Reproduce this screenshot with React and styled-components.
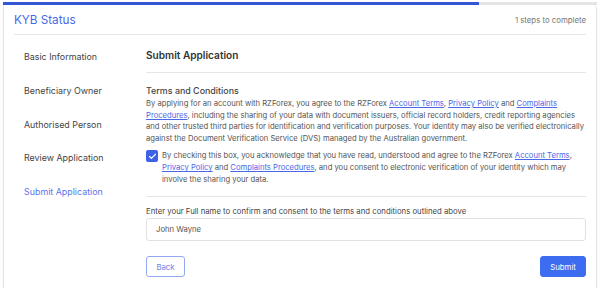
import styled, { createGlobalStyle } from 'styled-components';
import { Check } from 'lucide-react';

const GlobalStyle = createGlobalStyle`
    body {
        margin: 0;
        background: #ffffff;
        font-family: Inter, "Noto Sans", sans-serif;
        color: #444;
    }
`

const Page = styled.div`
    padding: 2px 5px 0 3px;
`

const Card = styled.div`
    box-sizing: border-box;
    height: 285px;
    border: 1px solid #e4e4e4;
    border-top: none;
    border-radius: 0 4px 4px 4px;
    box-shadow: 0 1px 2px rgba(0, 0, 0, 0.06);
    overflow: hidden;
    display: flex;
    flex-direction: column;
`

const Track = styled.div`
    height: 3px;
    background: #e4e4e4;
`

const Fill = styled.div`
    height: 100%;
    background: #3356d6;
`

const Header = styled.div`
    display: flex;
    align-items: center;
    justify-content: space-between;
    height: 29px;
    margin: 0 10px;
    border-bottom: 1px solid #e6e6e6;
`

const Title = styled.div`
    font-size: 11.7px;
    color: #4a67e8;
`

const StepsLeft = styled.div`
    font-size: 7.8px;
    color: #777;
`

const Body = styled.div`
    display: flex;
    flex: 1;
    margin: 0 10px;
`

const Sidebar = styled.div`
    width: 132px;
    padding: 5px 0 0 10px;
    box-sizing: border-box;
    display: flex;
    flex-direction: column;
`

const NavItem = styled.div`
    height: 33.75px;
    line-height: 33.75px;
    font-size: 8.9px;
    color: ${p => (p.$active ? '#5b74ee' : '#444')};
`

const Content = styled.div`
    flex: 1;
    display: flex;
    flex-direction: column;
`

const SectionTitle = styled.div`
    font-size: 10.1px;
    font-weight: 600;
    line-height: 16px;
    color: #333;
    padding: 12px 0 9px;
    border-bottom: 1px solid #e6e6e6;
`

const TermsTitle = styled.div`
    font-size: 8.9px;
    font-weight: 500;
    line-height: 14px;
    color: #444;
    margin-top: 11px;
`

const Paragraph = styled.p`
    margin: 0;
    font-size: 7.65px;
    line-height: 11.6px;
    color: #555;
`

const Link = styled.a`
    color: #4a67e8;
    text-decoration: underline;
`

const CheckRow = styled.div`
    display: flex;
    gap: 4px;
    margin-top: 6px;
    padding-bottom: 10px;
    border-bottom: 1px solid #e6e6e6;
`

const Box = styled.div`
    flex: none;
    width: 12px;
    height: 12px;
    border-radius: 2px;
    background: #3d62e6;
    display: flex;
    align-items: center;
    justify-content: center;
    color: #fff;
`

const CheckText = styled.div`
    font-size: 7.65px;
    line-height: 12px;
    color: #555;
`

const Label = styled.div`
    font-size: 7.75px;
    line-height: 12px;
    color: #444;
    margin-top: 8px;
`

const Input = styled.div`
    box-sizing: border-box;
    height: 23px;
    margin-top: 1px;
    border: 1px solid #e2e2e2;
    border-radius: 3px;
    padding: 0 9px;
    display: flex;
    align-items: center;
    font-size: 7.7px;
    color: #555;
`

const Actions = styled.div`
    display: flex;
    justify-content: space-between;
    margin-top: 15px;
`

const Button = styled.button`
    box-sizing: border-box;
    height: 21px;
    padding: 0;
    width: ${p => p.$w}px;
    border-radius: 3px;
    font-family: inherit;
    font-size: 7.8px;
    border: 1px solid ${p => (p.$primary ? '#3d6cf0' : '#93a7f5')};
    background: ${p => (p.$primary ? '#3d6cf0' : '#fff')};
    color: ${p => (p.$primary ? '#fff' : '#6b82ee')};
`

const steps = ['Basic Information', 'Beneficiary Owner', 'Authorised Person', 'Review Application', 'Submit Application']

const App = () => {
    return (
        <Page>
            <GlobalStyle />
            <Track><Fill style={{ width: '80.2%' }} /></Track>
            <Card>
                <Header>
                    <Title>KYB Status</Title>
                    <StepsLeft>1 steps to complete</StepsLeft>
                </Header>
                <Body>
                    <Sidebar>
                        {steps.map((s, i) => (
                            <NavItem key={s} $active={i === steps.length - 1}>{s}</NavItem>
                        ))}
                    </Sidebar>
                    <Content>
                        <SectionTitle>Submit Application</SectionTitle>
                        <TermsTitle>Terms and Conditions</TermsTitle>
                        <Paragraph>
                            By applying for an account with RZForex, you agree to the RZForex <Link>Account Terms</Link>, <Link>Privacy Policy</Link> and <Link>Complaints Procedures</Link>, including the sharing of your data with document issuers, official record holders, credit reporting agencies and other trusted third parties for identification and verification purposes. Your identity may also be verified electronically against the Document Verification Service (DVS) managed by the Australian government.
                        </Paragraph>
                        <CheckRow>
                            <Box><Check size={9} strokeWidth={3} /></Box>
                            <CheckText>
                                By checking this box, you acknowledge that you have read, understood and agree to the RZForex <Link>Account Terms</Link>, <Link>Privacy Policy</Link> and <Link>Complaints Procedures</Link>, and you consent to electronic verification of your identity which may involve the sharing your data.
                            </CheckText>
                        </CheckRow>
                        <Label>Enter your Full name to confirm and consent to the terms and conditions outlined above</Label>
                        <Input>John Wayne</Input>
                        <Actions>
                            <Button $w={39}>Back</Button>
                            <Button $w={46} $primary>Submit</Button>
                        </Actions>
                    </Content>
                </Body>
            </Card>
        </Page>
    )
}

export default App
